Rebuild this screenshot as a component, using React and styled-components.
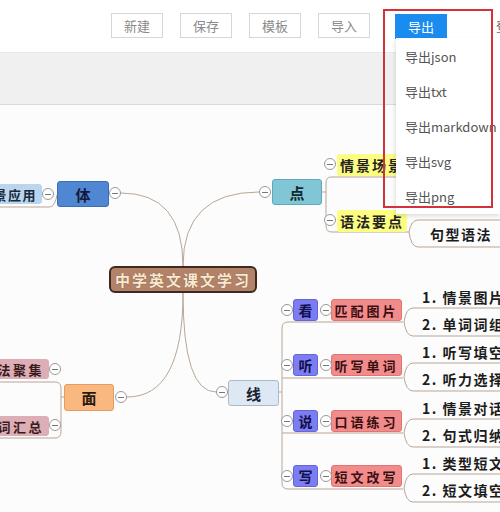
import React from 'react';
import styled, { createGlobalStyle } from 'styled-components';

const GlobalStyle = createGlobalStyle`
    html, body {
        margin: 0;
        padding: 0;
        background: #fff;
    }
    body {
        font-family: "Noto Sans CJK SC", "Noto Sans", sans-serif;
        overflow: hidden;
    }
`;

// canvas starts at this page y, all diagram data below is in page coords
const OY = 106;

const tones = {
    root: { bg: '#b3826a', bd: '#3e2a1d', fg: '#f7ead0' },
    blue: { bg: '#5087d3', bd: '#3d6eb3', fg: '#141a3a' },
    teal: { bg: '#80c6d5', bd: '#62a8b8', fg: '#142a30' },
    orange: { bg: '#f8b880', bd: '#e39d62', fg: '#2a1a10' },
    pale: { bg: '#dde8f4', bd: '#a9b9ca', fg: '#1a2230' },
    sky: { bg: '#bcd5ef', bd: '#bcd5ef', fg: '#1a2a3a' },
    yellow: { bg: '#fdfd82', bd: '#fdfd82', fg: '#222' },
    pink: { bg: '#deaeb6', bd: '#deaeb6', fg: '#3a1a1a' },
    purple: { bg: '#7d7df3', bd: '#6565d8', fg: '#10104a' },
    red: { bg: '#f28b8b', bd: '#e27474', fg: '#3a0f0f' },
};

const Page = styled.div`
    position: relative;
    width: 500px;
    height: 512px;
    overflow: hidden;
    display: flex;
    flex-direction: column;
`;

const Toolbar = styled.div`
    position: relative;
    z-index: 2;
    height: 53px;
    flex: none;
    box-sizing: border-box;
    display: flex;
    align-items: flex-start;
    gap: 17px;
    padding: 13px 0 0 111px;
    background: #fff;
    border-bottom: 1px solid #e9e9e9;
`;

const Button = styled.button`
    flex: none;
    width: 52px;
    height: 25px;
    padding: 0;
    box-sizing: border-box;
    border: 1px solid ${props => (props.primary ? '#1a8cf0' : '#d6d6d6')};
    background: ${props => (props.primary ? '#1a8cf0' : '#fff')};
    color: ${props => (props.primary ? '#fff' : '#8a8a8a')};
    font-family: "Noto Sans CJK SC", sans-serif;
    font-size: 13px;
    cursor: pointer;
`;

const ExportWrap = styled.div`
    position: relative;
    flex: none;
    margin-left: 8px;
`;

const DropMenu = styled.ul`
    position: absolute;
    top: 25px;
    left: 1px;
    width: 104px;
    margin: 0;
    padding: 1px 0 0;
    list-style: none;
    background: #fff;
    box-shadow: -1px 2px 4px rgba(0, 0, 0, 0.12);
`;

const MenuItem = styled.li`
    height: 35px;
    line-height: 35px;
    padding-left: 9px;
    font-size: 13px;
    color: #555;
    white-space: nowrap;
`;

const LoginLink = styled.span`
    flex: none;
    margin-left: 32px;
    line-height: 25px;
    font-size: 13px;
    color: #666;
    white-space: nowrap;
`;

const Band = styled.div`
    height: 51px;
    flex: none;
    background: #f0f0f0;
    border-bottom: 1px solid #dadada;
`;

const Canvas = styled.div`
    position: relative;
    flex: 1;
    background: #fcfcfc;
`;

const Lines = styled.svg`
    position: absolute;
    left: 0;
    top: 0;
    width: 500px;
    height: 406px;
    overflow: visible;
`;

const Node = styled.div`
    position: absolute;
    left: ${props => props.$x}px;
    top: ${props => props.$y - OY}px;
    width: ${props => props.$w}px;
    height: ${props => props.$h}px;
    box-sizing: border-box;
    display: flex;
    align-items: center;
    justify-content: ${props => props.$align || 'center'};
    padding: 0 4px;
    background: ${props => tones[props.tone].bg};
    border: ${props => (props.tone === 'root' ? 2 : 1)}px solid ${props => tones[props.tone].bd};
    border-radius: ${props => (props.tone === 'root' ? 6 : 3)}px;
    color: ${props => tones[props.tone].fg};
    font-size: ${props => props.$size || 14}px;
    font-weight: 700;
    letter-spacing: ${props => props.$ls || 0}px;
    white-space: nowrap;
    text-shadow: ${props => (props.tone === 'root' ? '0 0 1px rgba(80,40,20,0.6)' : 'none')};
`;

const Leaf = styled.div`
    position: absolute;
    left: ${props => props.$x}px;
    top: ${props => props.$y - OY - 10}px;
    height: 20px;
    line-height: 20px;
    font-size: 14px;
    font-weight: 700;
    letter-spacing: 1.5px;
    color: #1c1c1c;
    white-space: nowrap;
`;

const Toggle = styled.div`
    position: absolute;
    left: ${props => props.$cx - 6}px;
    top: ${props => props.$cy - OY - 6}px;
    width: 12px;
    height: 12px;
    box-sizing: border-box;
    border: 1px solid #9a9a9a;
    border-radius: 50%;
    background: #fff;

    &::after {
        content: '';
        position: absolute;
        left: 2px;
        right: 2px;
        top: 4.5px;
        height: 1px;
        background: #777;
    }
`;

const Highlight = styled.div`
    position: absolute;
    z-index: 3;
    left: 383px;
    top: 9px;
    width: 110px;
    height: 199px;
    box-sizing: border-box;
    border: 2px solid #d2333b;
    pointer-events: none;
`;

const rows = [
    { yc: 311, head: '看', task: '匹配图片', leaves: ['1. 情景图片', '2. 单词词组'] },
    { yc: 366, head: '听', task: '听写单词', leaves: ['1. 听写填空', '2. 听力选择'] },
    { yc: 422, head: '说', task: '口语练习', leaves: ['1. 情景对话', '2. 句式归纳'] },
    { yc: 477, head: '写', task: '短文改写', leaves: ['1. 类型短文', '2. 短文填空'] },
];

const nodes = [
    { x: -22, y: 185, w: 64, h: 20, tone: 'sky', text: '场景应用', size: 13, ls: 1.5, align: 'flex-end' },
    { x: 57, y: 182, w: 52, h: 26, tone: 'blue', text: '体', size: 15 },
    { x: 272, y: 180, w: 50, h: 26, tone: 'teal', text: '点', size: 15 },
    { x: 337, y: 155, w: 70, h: 22, tone: 'yellow', text: '情景场景', size: 14, ls: 2 },
    { x: 337, y: 211, w: 70, h: 22, tone: 'yellow', text: '语法要点', size: 14, ls: 2 },
    { x: 109, y: 267, w: 148, h: 27, tone: 'root', text: '中学英文课文学习', size: 15, ls: 2 },
    { x: 64, y: 385, w: 50, h: 27, tone: 'orange', text: '面', size: 15 },
    { x: -20, y: 360, w: 69, h: 20, tone: 'pink', text: '语法聚集', size: 13, ls: 2.5, align: 'flex-end' },
    { x: -20, y: 417, w: 69, h: 20, tone: 'pink', text: '单词汇总', size: 13, ls: 2.5, align: 'flex-end' },
    { x: 228, y: 381, w: 51, h: 26, tone: 'pale', text: '线', size: 15 },
];

const toggles = [
    [48, 195], [115, 194], [265, 193], [330, 165], [330, 221],
    [121, 398], [55, 370], [55, 426], [222, 393],
];

const linePaths = [
    'M121,194 Q183,194 183,267',
    'M183,267 Q183,193 259,193',
    'M183,294 Q183,398 127,398',
    'M183,294 Q183,393 216,393',
    'M0,208 L50,208 Q55,207 57,196',
    'M322,193 L326,193',
    'M338,178 L331,178 Q326,178 326,184 L326,227 Q326,233 332,233 L409,233',
    'M338,178 L400,178',
    'M409,233 Q411,221 418,221 L500,221',
    'M409,233 Q411,248 418,248 L500,248',
    'M64,398 L61,398',
    'M0,383 L55,383 Q61,383 61,389 L61,433 Q61,439 55,439 L0,439',
    'M279,393 L282,393',
    'M403,323 L288,323 Q282,323 282,329 L282,484 Q282,490 288,490 L403,490',
    'M282,379 L403,379',
    'M282,434 L403,434',
];

const MindMap = () => {
    const rowPaths = rows.flatMap(r => {
        const p = r.yc + 12;
        return [
            `M404,${p} Q406,${r.yc - 2} 413,${r.yc - 2} L500,${r.yc - 2}`,
            `M404,${p} Q406,${r.yc + 26} 413,${r.yc + 26} L500,${r.yc + 26}`,
        ];
    });

    return (
        <Canvas>
            <Lines viewBox={`0 ${OY} 500 406`}>
                {[...linePaths, ...rowPaths].map((d, i) => (
                    <path key={i} d={d} fill="none" stroke="#b7a796" strokeWidth="1" />
                ))}
            </Lines>

            {nodes.map(n => (
                <Node
                    key={n.text}
                    tone={n.tone}
                    $x={n.x}
                    $y={n.y}
                    $w={n.w}
                    $h={n.h}
                    $size={n.size}
                    $ls={n.ls}
                    $align={n.align}
                >
                    {n.text}
                </Node>
            ))}

            <Leaf $x={430} $y={235}>句型语法</Leaf>

            {rows.map(r => (
                <React.Fragment key={r.head}>
                    <Node tone="purple" $x={293} $y={r.yc - 11} $w={25} $h={22} $size={14}>
                        {r.head}
                    </Node>
                    <Node tone="red" $x={331} $y={r.yc - 11} $w={71} $h={22} $size={13} $ls={3}>
                        {r.task}
                    </Node>
                    <Toggle $cx={287} $cy={r.yc} />
                    <Toggle $cx={326} $cy={r.yc} />
                    <Leaf $x={422} $y={r.yc - 13}>{r.leaves[0]}</Leaf>
                    <Leaf $x={422} $y={r.yc + 14}>{r.leaves[1]}</Leaf>
                </React.Fragment>
            ))}

            {toggles.map(([cx, cy]) => (
                <Toggle key={`${cx}-${cy}`} $cx={cx} $cy={cy} />
            ))}
        </Canvas>
    );
};

const exportItems = ['导出json', '导出txt', '导出markdown', '导出svg', '导出png'];

const App = () => {
    return (
        <Page>
            <GlobalStyle />
            <Toolbar>
                <Button>新建</Button>
                <Button>保存</Button>
                <Button>模板</Button>
                <Button>导入</Button>
                <ExportWrap>
                    <Button primary>导出</Button>
                    <DropMenu>
                        {exportItems.map(item => (
                            <MenuItem key={item}>{item}</MenuItem>
                        ))}
                    </DropMenu>
                </ExportWrap>
                <LoginLink>登录</LoginLink>
            </Toolbar>
            <Band />
            <MindMap />
            <Highlight />
        </Page>
    );
};

export default App;
